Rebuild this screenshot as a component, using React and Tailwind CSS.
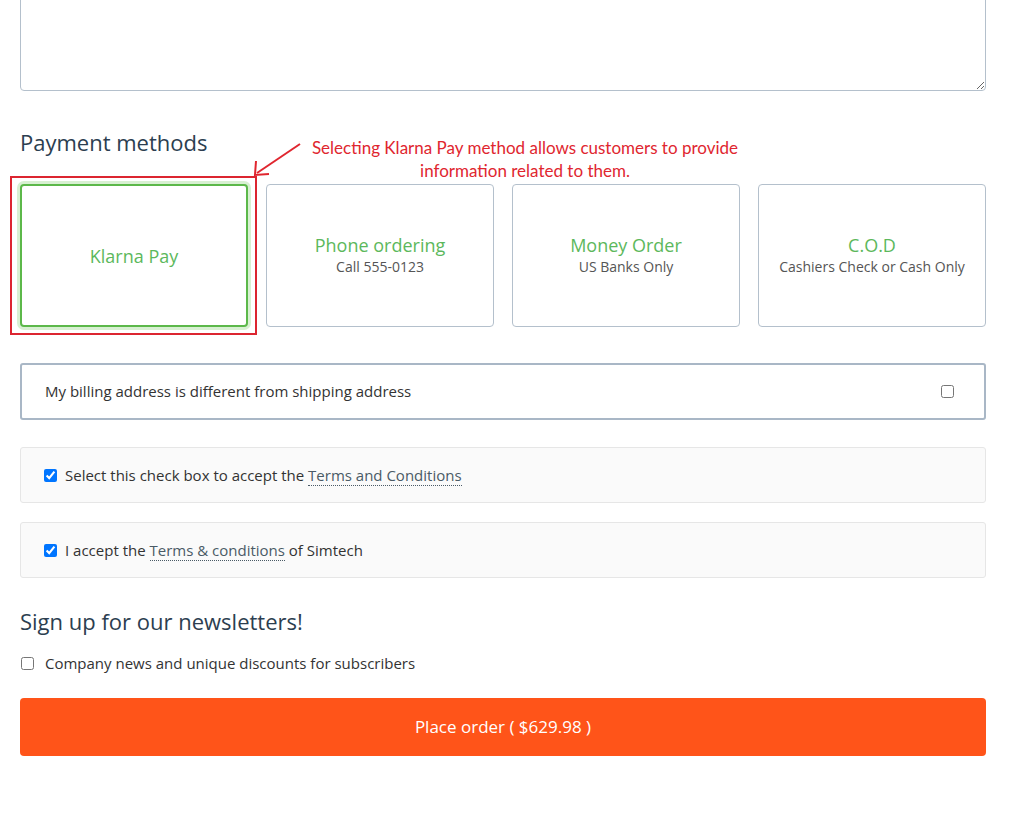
const methods = [
  { title: 'Klarna Pay', sub: null, active: true },
  { title: 'Phone ordering', sub: 'Call 555-0123' },
  { title: 'Money Order', sub: 'US Banks Only' },
  { title: 'C.O.D', sub: 'Cashiers Check or Cash Only' },
]

const TermsRow = ({ children }) => (
  <div className="bg-[#fafafa] border border-[#e6e6e6] rounded-[3px] h-[56px] flex items-center px-[23px]">
    <input type="checkbox" defaultChecked className="w-[13px] h-[13px] mr-[8px] accent-[#0075ff]" />
    <span className="text-[15px] text-[#333]">{children}</span>
  </div>
)

const DotLink = ({ children }) => (
  <a className="text-[#4a5a66] border-b border-dotted border-[#4a5a66] leading-[18px]">{children}</a>
)

export default function App() {
  return (
    <div className="w-[1010px] h-[837px] overflow-hidden bg-white px-[20px] pr-[24px]" style={{ fontFamily: '"Open Sans", sans-serif' }}>
      <textarea className="block w-full h-[111px] -mt-[20px] border border-[#b4c0cc] rounded-[4px] resize-y" />

      {/* Payment methods */}
      <div className="relative mt-[36px]">
        <h2 className="text-[22px] leading-[30px] text-[#2c3e50]">Payment methods</h2>

        <div className="absolute left-[290px] top-[9px] w-[430px] text-center text-[17px] leading-[23px] text-[#e0262f]" style={{ fontFamily: 'Lato, sans-serif' }}>
          Selecting Klarna Pay method allows customers to provide information related to them.
        </div>
        <svg className="absolute left-[230px] top-[15px]" width="60" height="38" viewBox="0 0 60 38">
          <path d="M50 2 L7 31" stroke="#e0262f" strokeWidth="2" fill="none" />
          <path d="M6 19 L5 33 L19 32" stroke="#e0262f" strokeWidth="2" fill="none" />
        </svg>

        <div className="grid grid-cols-4 gap-[18px] mt-[27px]">
          {methods.map(m => (
            <div key={m.title} className="relative">
              {m.active && (
                <div className="absolute -left-[10px] -top-[8px] w-[247px] h-[159px] border-2 border-[#dc2530]" />
              )}
              <div className={`h-[143px] rounded-[4px] flex flex-col items-center justify-center bg-white ${m.active ? 'border-2 border-[#5cb84a] shadow-[0_0_0_3px_#d8f0d2]' : 'border border-[#b4c0cc]'}`}>
                <div className="text-[18px] leading-[22px] text-[#5cb85c]">{m.title}</div>
                {m.sub && <div className="text-[14px] leading-[22px] text-[#555]">{m.sub}</div>}
              </div>
            </div>
          ))}
        </div>
      </div>

      {/* Billing */}
      <div className="mt-[36px] h-[57px] border-2 border-[#a9b7c6] rounded-[3px] flex items-center justify-between pl-[23px] pr-[30px]">
        <span className="text-[15px] text-[#333]">My billing address is different from shipping address</span>
        <input type="checkbox" className="w-[13px] h-[13px]" />
      </div>

      <div className="mt-[27px] space-y-[19px]">
        <TermsRow>Select this check box to accept the <DotLink>Terms and Conditions</DotLink></TermsRow>
        <TermsRow>I accept the <DotLink>Terms &amp; conditions</DotLink> of Simtech</TermsRow>
      </div>

      {/* Newsletters */}
      <h2 className="mt-[28px] text-[22px] leading-[30px] text-[#2c3e50]">Sign up for our newsletters!</h2>
      <label className="mt-[16px] flex items-center">
        <input type="checkbox" className="w-[13px] h-[13px] ml-[1px] mr-[11px]" />
        <span className="text-[15px] text-[#333]">Company news and unique discounts for subscribers</span>
      </label>

      <button className="mt-[23px] w-full h-[58px] bg-[#ff5419] rounded-[4px] text-white text-[17px]">
        Place order ( $629.98 )
      </button>
    </div>
  )
}
